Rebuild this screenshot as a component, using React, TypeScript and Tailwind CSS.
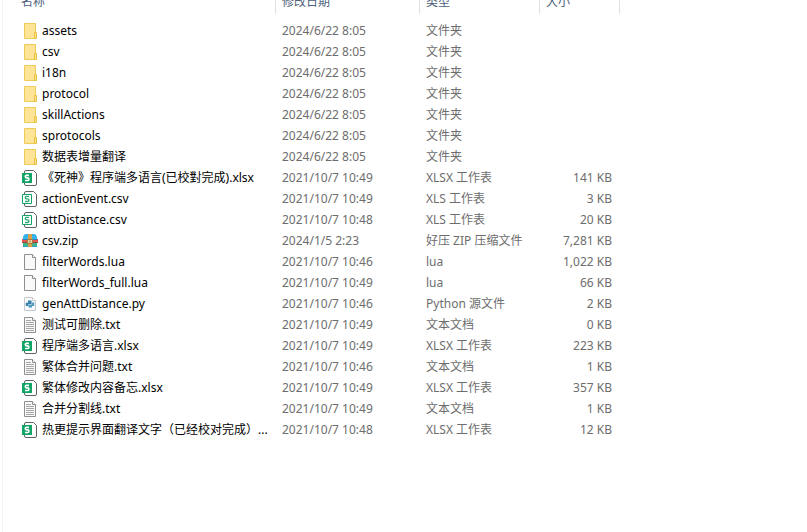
import type { ReactNode } from 'react';

type Kind = 'folder' | 'xlsx' | 'csv' | 'zip' | 'file' | 'python' | 'text';

interface Entry {
  name: string;
  date: string;
  type: string;
  size?: string;
  kind: Kind;
}

const entries: Entry[] = [
  { name: 'assets', date: '2024/6/22 8:05', type: '文件夹', kind: 'folder' },
  { name: 'csv', date: '2024/6/22 8:05', type: '文件夹', kind: 'folder' },
  { name: 'i18n', date: '2024/6/22 8:05', type: '文件夹', kind: 'folder' },
  { name: 'protocol', date: '2024/6/22 8:05', type: '文件夹', kind: 'folder' },
  { name: 'skillActions', date: '2024/6/22 8:05', type: '文件夹', kind: 'folder' },
  { name: 'sprotocols', date: '2024/6/22 8:05', type: '文件夹', kind: 'folder' },
  { name: '数据表增量翻译', date: '2024/6/22 8:05', type: '文件夹', kind: 'folder' },
  { name: '《死神》程序端多语言(已校對完成).xlsx', date: '2021/10/7 10:49', type: 'XLSX 工作表', size: '141 KB', kind: 'xlsx' },
  { name: 'actionEvent.csv', date: '2021/10/7 10:49', type: 'XLS 工作表', size: '3 KB', kind: 'csv' },
  { name: 'attDistance.csv', date: '2021/10/7 10:48', type: 'XLS 工作表', size: '20 KB', kind: 'csv' },
  { name: 'csv.zip', date: '2024/1/5 2:23', type: '好压 ZIP 压缩文件', size: '7,281 KB', kind: 'zip' },
  { name: 'filterWords.lua', date: '2021/10/7 10:46', type: 'lua', size: '1,022 KB', kind: 'file' },
  { name: 'filterWords_full.lua', date: '2021/10/7 10:49', type: 'lua', size: '66 KB', kind: 'file' },
  { name: 'genAttDistance.py', date: '2021/10/7 10:46', type: 'Python 源文件', size: '2 KB', kind: 'python' },
  { name: '测试可删除.txt', date: '2021/10/7 10:49', type: '文本文档', size: '0 KB', kind: 'text' },
  { name: '程序端多语言.xlsx', date: '2021/10/7 10:49', type: 'XLSX 工作表', size: '223 KB', kind: 'xlsx' },
  { name: '繁体合并问题.txt', date: '2021/10/7 10:46', type: '文本文档', size: '1 KB', kind: 'text' },
  { name: '繁体修改内容备忘.xlsx', date: '2021/10/7 10:49', type: 'XLSX 工作表', size: '357 KB', kind: 'xlsx' },
  { name: '合并分割线.txt', date: '2021/10/7 10:49', type: '文本文档', size: '1 KB', kind: 'text' },
  { name: '热更提示界面翻译文字（已经校对完成）...', date: '2021/10/7 10:48', type: 'XLSX 工作表', size: '12 KB', kind: 'xlsx' },
];

const page = (
  <>
    <path d="M2.5.5h8l3 3v12h-11z" fill="#f9f9f9" stroke="#8f8f8f" />
    <path d="M10.5.5v3h3" fill="#fff" stroke="#8f8f8f" />
  </>
);

const sheetPage = (
  <path d="M2.5 3V2Q2.5.5 4 .5h7.500l3 3V14q0 1.500-1.500 1.500H4Q2.500 15.500 2.500 14v-1" fill="#fff" stroke="#606366" />
);

const letterS = 'M7 5.4H4.500Q3.300 5.400 3.300 6.600T4.500 7.900h1.200q1.200 0 1.200 1.300t-1.200 1.300H3';

const icons: Record<Kind, ReactNode> = {
  folder: (
    <>
      <path d="M2.5.5h11v15h-11z" fill="#fee496" stroke="#edcb56" />
      <path d="M12.5 9.5h2v6h-2z" fill="#fee289" stroke="#e9c145" />
    </>
  ),
  xlsx: (
    <>
      {sheetPage}
      <path d="M0 3h10v10H0z" fill="#12a567" />
      <path d={letterS} fill="none" stroke="#fff" strokeWidth="1.6" />
    </>
  ),
  csv: (
    <>
      {sheetPage}
      <path d="M.5 3.5h9v9h-9z" fill="#fff" stroke="#12a567" />
      <path d={letterS} fill="none" stroke="#2cac76" strokeWidth="1.4" />
    </>
  ),
  zip: (
    <>
      <path d="M1 6V4.5Q1.5 1 4 1h8q2.5 0 3 3.500V6z" fill="#35b3ea" />
      <path d="M0 6h16v4H0z" fill="#e2574b" />
      <path d="M1 6h14v1H1z" fill="#2b83bd" />
      <path d="M1 10h14v4H1z" fill="#3fb48a" />
      <path d="M0 9h16v1H0z" fill="#8a4f3f" />
      <path d="M1 13h14v1H1z" fill="#2e9ed0" />
      <path d="M6 1h4v13H6z" fill="#d9a04a" />
      <path d="M5.5 6.5h5v4h-5z" fill="#f3d9a4" stroke="#a8753a" />
      <path d="M7.500 7.500h1v2h-1z" fill="#8f5f2b" />
    </>
  ),
  file: page,
  python: (
    <>
      <path d="M2.5 1.5h8l3 3v10h-11z" fill="#f7f9fa" stroke="#c6cace" />
      <path d="M10.5 1.5v3h3" fill="#fff" stroke="#c6cace" />
      <path d="M6 4.5h3.500v3.700H6.300v1.800H3.800V6.800H6z" fill="#3580ab" />
      <path d="M10 11.5H6.500V8.800h3.200V6.500h2.500V10H10z" fill="#4f9cc3" />
    </>
  ),
  text: (
    <>
      {page}
      <path d="M4 3.5h5M4 5.5h8M4 7.5h8M4 9.5h8M4 11.5h8M4 13.5h8" stroke="#a6a6a6" />
    </>
  ),
};

function FileIcon({ kind }: { kind: Kind }) {
  return (
    <svg viewBox="0 0 16 16" className="h-4 w-4 shrink-0" aria-hidden="true">
      {icons[kind]}
    </svg>
  );
}

function ColumnHeader({ label, first }: { label: string; first?: boolean }) {
  return (
    <th scope="col" className="h-6 border-r border-[#e2e2e2] p-0 font-normal">
      <button className={`block w-full text-left text-[#4c607a] ${first ? 'pl-[18px]' : 'pl-1.5'}`}>{label}</button>
    </th>
  );
}

export default function App() {
  return (
    <main className="min-h-screen bg-white pl-0.5 font-['Noto_Sans','Noto_Sans_CJK_SC',sans-serif] text-xs leading-4">
      <div className="flow-root min-h-screen border-l border-[#f3f3f3]">
        {/* the header row is partly scrolled out of view */}
        <table className="-mt-2.5 w-full table-fixed border-separate border-spacing-0">
          <colgroup>
            <col className="w-[273px]" />
            <col className="w-36" />
            <col className="w-30" />
            <col className="w-20" />
            <col />
          </colgroup>
          <thead>
            <tr>
              <ColumnHeader label="名称" first />
              <ColumnHeader label="修改日期" />
              <ColumnHeader label="类型" />
              <ColumnHeader label="大小" />
              <td />
            </tr>
          </thead>
          <tbody className="text-[#6d6d6d] before:block before:h-1.5">
            {entries.map((e) => (
              <tr key={e.name} className="h-[21px] whitespace-nowrap">
                <td className="p-0 pl-[19px]">
                  <div className="flex items-center gap-1 text-black">
                    <FileIcon kind={e.kind} />
                    <span>{e.name}</span>
                  </div>
                </td>
                <td className="p-0 pl-1.5">{e.date}</td>
                <td className="p-0 pl-1.5">{e.type}</td>
                <td className="p-0 pr-2 text-right">{e.size}</td>
                <td />
              </tr>
            ))}
          </tbody>
        </table>
      </div>
    </main>
  );
}
